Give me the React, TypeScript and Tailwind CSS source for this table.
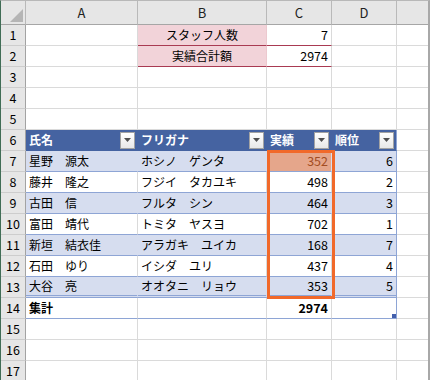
import type { ReactNode } from "react";
import { twMerge } from "tailwind-merge";

type Member = { name: string; kana: string; score: number; rank: number };

const members: Member[] = [
  { name: "星野　源太", kana: "ホシノ　ゲンタ", score: 352, rank: 6 },
  { name: "藤井　隆之", kana: "フジイ　タカユキ", score: 498, rank: 2 },
  { name: "古田　信", kana: "フルタ　シン", score: 464, rank: 3 },
  { name: "富田　靖代", kana: "トミタ　ヤスヨ", score: 702, rank: 1 },
  { name: "新垣　結衣佳", kana: "アラガキ　ユイカ", score: 168, rank: 7 },
  { name: "石田　ゆり", kana: "イシダ　ユリ", score: 437, rank: 4 },
  { name: "大谷　亮", kana: "オオタニ　リョウ", score: 353, rank: 5 },
];

const total = members.reduce((s, m) => s + m.score, 0);

function Cell({ className, children }: { className?: string; children?: ReactNode }) {
  return (
    <div
      className={twMerge(
        "flex items-center overflow-hidden whitespace-nowrap border-b border-r border-[#dadada] px-[3px] leading-none",
        className
      )}
    >
      {children}
    </div>
  );
}

function RowHead({ n }: { n: number }) {
  return (
    <div className="flex items-center justify-center border-b border-r border-b-[#cdcdcd] border-r-[#a3a3a3] bg-[#e6e6e6] text-[12.5px] leading-none">
      {n}
    </div>
  );
}

function ColHead({ label, last }: { label?: string; last?: boolean }) {
  return (
    <div
      className={twMerge(
        "flex items-center justify-center border-b border-r border-b-[#a6a6a6] border-r-[#b9b9b9] bg-[#e6e6e6] text-[13px] leading-none text-[#222]",
        last && "border-r-0"
      )}
    >
      {label}
    </div>
  );
}

function FilterButton() {
  return (
    <span className="ml-auto flex h-[17px] w-[15px] shrink-0 items-center justify-center border border-[#a3a3a3] bg-gradient-to-b from-white to-[#e8e8e8]">
      <svg width="7" height="4" viewBox="0 0 7 4">
        <path d="M0 0h7L3.5 4z" fill="#505050" />
      </svg>
    </span>
  );
}

function HeaderCell({ label, edge }: { label: string; edge?: boolean }) {
  return (
    <Cell
      className={twMerge(
        "border-b-[#4563a1] border-r-[#4563a1] bg-[#4563a1] pr-[2px] font-bold text-white",
        edge && "border-r-[#8ea5d5]"
      )}
    >
      {label}
      <FilterButton />
    </Cell>
  );
}

function Blank({ last }: { last?: boolean }) {
  return <Cell className={last ? "border-r-0" : ""} />;
}

export default function App() {
  return (
    <div className="h-[380px] w-[430px] overflow-hidden bg-white font-['Noto_Sans_CJK_JP','Noto_Sans',sans-serif] text-[12px] text-black">
      <div className="relative h-full border-l border-r-2 border-t border-l-[#416d56] border-r-[#a8a8a8] border-t-[#b8b8b8]">
        <div className="grid grid-cols-[25px_112px_129px_65px_65px_1fr] grid-rows-[24px_repeat(17,21px)]">
          {/* column headers */}
          <div className="relative border-b border-r border-b-[#a6a6a6] border-r-[#b9b9b9] bg-[#e6e6e6]">
            <svg className="absolute bottom-[2px] right-[2px]" width="13" height="13" viewBox="0 0 13 13">
              <path d="M13 0v13H0z" fill="#b5b5b5" />
            </svg>
          </div>
          <ColHead label="A" />
          <ColHead label="B" />
          <ColHead label="C" />
          <ColHead label="D" />
          <ColHead last />

          {/* summary block */}
          <RowHead n={1} />
          <Blank />
          <Cell className="justify-center border-b-[#a93a52] border-r-[#ecc9cf] bg-[#f2d3d9]">スタッフ人数</Cell>
          <Cell className="justify-end border-b-[#a93a52] text-[12.5px]">{members.length}</Cell>
          <Blank />
          <Blank last />

          <RowHead n={2} />
          <Blank />
          <Cell className="justify-center border-b-[#a93a52] border-r-[#ecc9cf] bg-[#f2d3d9]">実績合計額</Cell>
          <Cell className="justify-end border-b-[#a93a52] text-[12.5px]">{total}</Cell>
          <Blank />
          <Blank last />

          {[3, 4, 5].map((n) => (
            <div key={n} className="contents">
              <RowHead n={n} />
              <Blank />
              <Blank />
              <Blank />
              <Blank />
              <Blank last />
            </div>
          ))}

          {/* table header */}
          <RowHead n={6} />
          <HeaderCell label="氏名" />
          <HeaderCell label="フリガナ" />
          <HeaderCell label="実績" />
          <HeaderCell label="順位" edge />
          <Blank last />

          {members.map((m, i) => {
            const band = i % 2 === 0;
            const fill = band ? "bg-[#d6ddef] border-r-[#d6ddef]" : "bg-white";
            const bottom =
              i === members.length - 1
                ? "border-b-[3px] border-double border-b-[#8ea5d5]"
                : "border-b-[#8ea5d5]";
            return (
              <div key={m.name} className="contents">
                <RowHead n={7 + i} />
                <Cell className={twMerge(fill, bottom)}>{m.name}</Cell>
                <Cell className={twMerge(fill, bottom)}>{m.kana}</Cell>
                <Cell
                  className={twMerge(
                    "justify-end text-[12.5px]",
                    fill,
                    bottom,
                    i === 0 && "bg-[#e5a68b] text-[#a24c22]"
                  )}
                >
                  {m.score}
                </Cell>
                <Cell className={twMerge("justify-end text-[12.5px]", fill, bottom, "border-r-[#8ea5d5]")}>
                  {m.rank}
                </Cell>
                <Blank last />
              </div>
            );
          })}

          {/* total row */}
          <RowHead n={14} />
          <Cell className="border-b-[#8ea5d5] font-bold">集計</Cell>
          <Cell className="border-b-[#8ea5d5]" />
          <Cell className="justify-end border-b-[#8ea5d5] text-[12.5px] font-bold">{total}</Cell>
          <Cell className="relative border-b-[#8ea5d5] border-r-[#8ea5d5]">
            <span className="absolute bottom-0 right-0 h-[4px] w-[4px] bg-[#4360ad]" />
          </Cell>
          <Blank last />

          {[15, 16, 17].map((n) => (
            <div key={n} className="contents">
              <RowHead n={n} />
              <Blank />
              <Blank />
              <Blank />
              <Blank />
              <Blank last />
            </div>
          ))}
        </div>

        {/* highlight around the score column */}
        <div className="pointer-events-none absolute left-[266px] top-[149px] h-[149px] w-[68px] border-[3px] border-[#f1692a]" />
      </div>
    </div>
  );
}
